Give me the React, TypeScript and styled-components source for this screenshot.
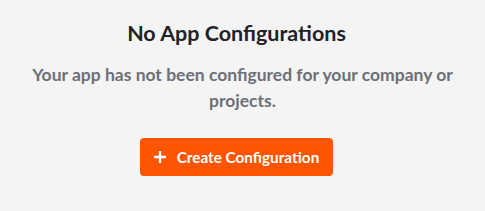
import styled, { createGlobalStyle } from 'styled-components';

const GlobalStyle = createGlobalStyle`
  html, body {
    margin: 0;
    padding: 0;
    background: #f4f4f4;
    font-family: Lato, "Liberation Sans", sans-serif;
  }
`;

export default function App() {
  return (
    <>
      <GlobalStyle />
      <EmptyState>
        <Title>No App Configurations</Title>
        <Description>
          Your app has not been configured for your company or projects.
        </Description>
        <CreateButton type="button">
          <PlusIcon width="12" height="12" viewBox="0 0 12 12" aria-hidden>
            <path d="M6 0v12M0 6h12" stroke="currentColor" strokeWidth="2.4" />
          </PlusIcon>
          Create Configuration
        </CreateButton>
      </EmptyState>
    </>
  );
}

const EmptyState = styled.section`
  display: flex;
  flex-direction: column;
  align-items: center;
  width: 485px;
  height: 211px;
  box-sizing: border-box;
  padding: 20px 24px 0;
`;

const Title = styled.h2`
  margin: 0 12px 0 0;
  color: #1f2329;
  font-size: 21.5px;
  font-weight: 700;
  line-height: 26px;
`;

const Description = styled.p`
  margin: 16px 0 0;
  color: #6b7079;
  font-size: 17.5px;
  font-weight: 700;
  line-height: 26px;
  text-align: center;
`;

const CreateButton = styled.button`
  display: flex;
  align-items: center;
  gap: 11px;
  height: 38px;
  margin: 24px 12px 0 0;
  padding: 0 14px;
  border: none;
  border-radius: 4px;
  background: #ff5500;
  color: #fff;
  font-family: inherit;
  font-size: 15.3px;
  font-weight: 700;
  cursor: pointer;
`;

const PlusIcon = styled.svg`
  display: block;
`;
